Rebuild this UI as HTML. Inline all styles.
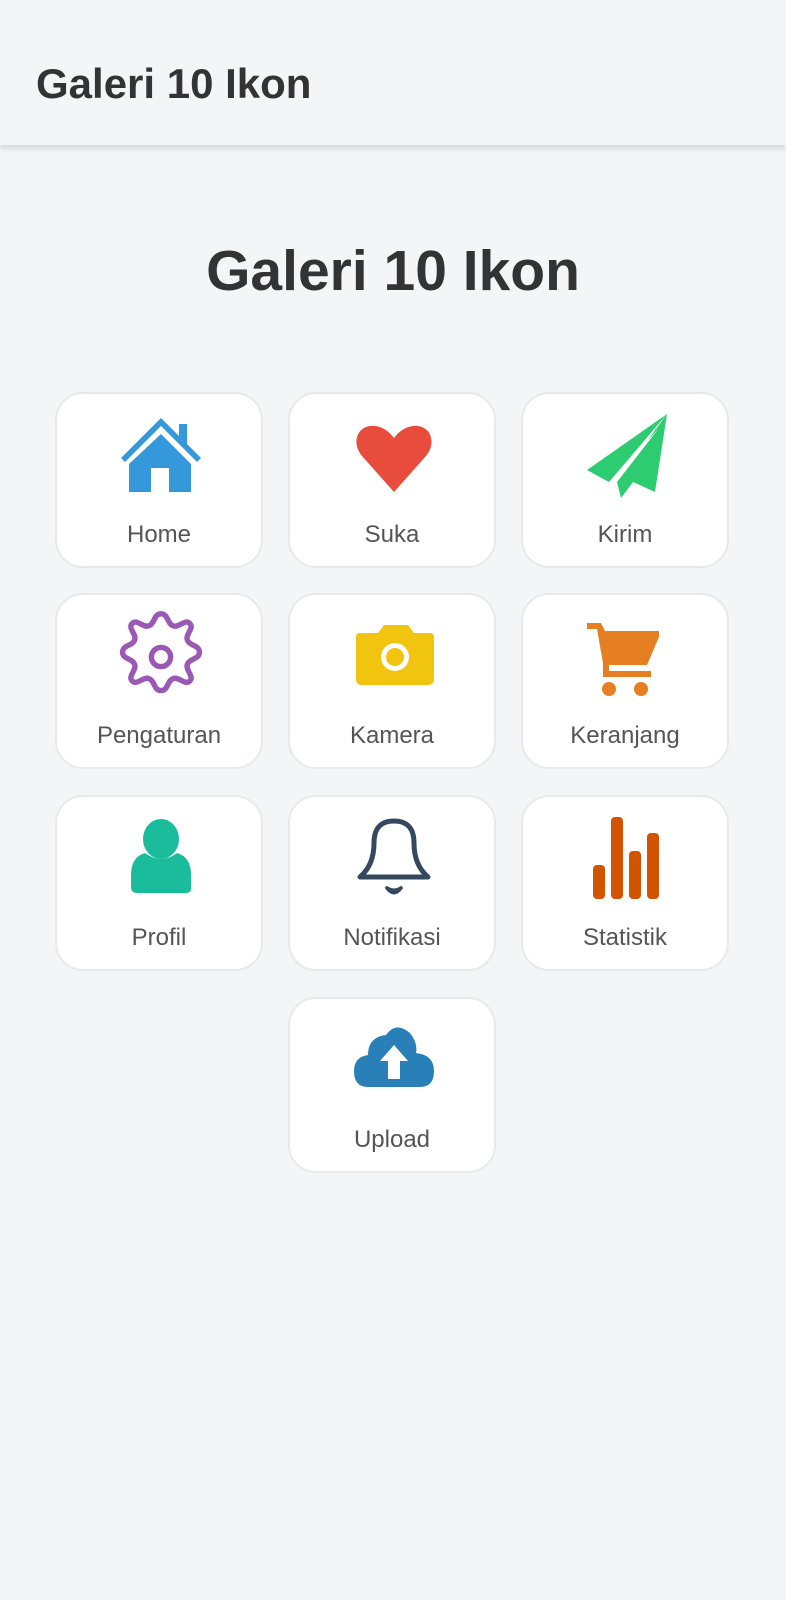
<!DOCTYPE html>
<html><head><meta charset="utf-8"><style>
*{margin:0;padding:0;box-sizing:border-box}
body{width:786px;height:1600px;background:#f4f5f7;font-family:"Liberation Sans",sans-serif;position:relative;overflow:hidden}
.hdr{position:absolute;left:0;top:0;width:786px;height:145px;background:#f4f5f7;box-shadow:0 3px 6px rgba(0,0,0,.15)}
.hdr span{position:absolute;left:36px;top:60px;font-size:42px;font-weight:bold;color:#333;line-height:48px}
h1{position:absolute;left:0;width:786px;top:238px;text-align:center;font-size:57px;color:#333;line-height:66px}
.card{position:absolute;width:208px;height:176px;background:#fff;border:2px solid #e8e9eb;border-radius:28px}
.card svg{position:absolute;left:62px;top:18px;width:84px;height:84px;overflow:visible}
.card .l{position:absolute;left:0;width:100%;top:126px;text-align:center;font-size:24px;color:#555;line-height:30px}
</style></head><body>
<div class="hdr"><span>Galeri 10 Ikon</span></div>
<h1>Galeri 10 Ikon</h1>

<div class="card" style="left:55px;top:392px">
<svg viewBox="0 0 84 84"><path d="M42 6 L2 46 L6 50 L42 14 L78 50 L82 46 L68 32 L68 12 L60 12 L60 24 Z" fill="#3498db"/><path d="M42 22 L10 52 L10 80 L32 80 L32 56 L50 56 L50 80 L72 80 L72 52 Z" fill="#3498db"/></svg>
<div class="l">Home</div></div>

<div class="card" style="left:288px;top:392px">
<svg viewBox="0 0 84 84"><path d="M42 80 L10 44 C0 32 4 16 18 14 C28 13 36 18 42 26 C48 18 56 13 66 14 C80 16 84 32 74 44 Z" fill="#e74c3c"/></svg>
<div class="l">Suka</div></div>

<div class="card" style="left:521px;top:392px">
<svg viewBox="0 0 84 84"><path d="M82 2 L2 58 L24 70 Z" fill="#2ecc71"/><path d="M82 2 L70 80 L48 70 L36 86 L32 70 Z" fill="#2ecc71"/><path d="M74 16 L32 70 L34 60 Z" fill="#fff"/></svg>
<div class="l">Kirim</div></div>

<div class="card" style="left:55px;top:593px">
<svg viewBox="0 0 84 84"><g transform="translate(42 44) scale(1.2) translate(-42 -44)" fill="none" stroke="#9b59b6" stroke-width="4.5"><path d="M42 8 c6 0 5 8 10 10 c5 2 10 -6 14 -2 c4 4 -4 9 -2 14 c2 5 10 4 10 10 c0 6 -8 5 -10 10 c-2 5 6 10 2 14 c-4 4 -9 -4 -14 -2 c-5 2 -4 10 -10 10 c-6 0 -5 -8 -10 -10 c-5 -2 -10 6 -14 2 c-4 -4 4 -9 2 -14 c-2 -5 -10 -4 -10 -10 c0 -6 8 -5 10 -10 c2 -5 -6 -10 -2 -14 c4 -4 9 4 14 2 c5 -2 4 -10 10 -10 Z"/><circle cx="42" cy="44" r="8"/></g></svg>
<div class="l">Pengaturan</div></div>

<div class="card" style="left:288px;top:593px">
<svg viewBox="0 0 84 84"><path d="M26 20 L32 12 L56 12 L62 20 L78 20 Q82 20 82 24 L82 66 Q82 72 76 72 L10 72 Q4 72 4 66 L4 24 Q4 20 8 20 Z" fill="#f1c40f"/><circle cx="43" cy="44" r="14" fill="#fff"/><circle cx="43" cy="44" r="9" fill="#f1c40f"/></svg>
<div class="l">Kamera</div></div>

<div class="card" style="left:521px;top:593px">
<svg viewBox="0 0 84 84"><path d="M2 10 L16 10 L20 18 L74 18 L74 24 L62 52 L24 52 L24 58 L66 58 L66 64 L18 64 L18 50 L12 16 L2 16 Z" fill="#e67e22"/><circle cx="24" cy="76" r="7" fill="#e67e22"/><circle cx="56" cy="76" r="7" fill="#e67e22"/></svg>
<div class="l">Keranjang</div></div>

<div class="card" style="left:55px;top:795px">
<svg viewBox="0 0 84 84"><ellipse cx="42" cy="24" rx="18" ry="20" fill="#1abc9c"/><path d="M26 38 Q42 50 58 38 Q72 42 72 60 L72 74 Q72 78 66 78 L18 78 Q12 78 12 72 L12 60 Q12 42 26 38 Z" fill="#1abc9c"/></svg>
<div class="l">Profil</div></div>

<div class="card" style="left:288px;top:795px">
<svg viewBox="0 0 84 84"><g fill="none" stroke="#34495e" stroke-width="5" stroke-linejoin="round"><path d="M42 6 Q62 6 62 28 Q62 50 76 62 L8 62 Q22 50 22 28 Q22 6 42 6 Z"/></g><path d="M34 72 Q42 84 50 72 Q42 78 34 72 Z" fill="#34495e" stroke="#34495e" stroke-width="3"/></svg>
<div class="l">Notifikasi</div></div>

<div class="card" style="left:521px;top:795px">
<svg viewBox="0 0 84 84"><g fill="#d35400"><rect x="8" y="50" width="12" height="34" rx="4"/><rect x="26" y="2" width="12" height="82" rx="4"/><rect x="44" y="36" width="12" height="48" rx="4"/><rect x="62" y="18" width="12" height="66" rx="4"/></g></svg>
<div class="l">Statistik</div></div>

<div class="card" style="left:288px;top:997px">
<svg viewBox="0 0 84 84"><path d="M16 70 Q2 70 2 54 Q2 40 16 38 Q16 20 34 18 Q44 4 58 16 Q66 26 64 36 Q82 38 82 54 Q82 70 68 70 Z" fill="#2980b9"/><path d="M42 28 L56 44 L48 44 L48 62 L36 62 L36 44 L28 44 Z" fill="#fff"/></svg>
<div class="l">Upload</div></div>
</body></html>
